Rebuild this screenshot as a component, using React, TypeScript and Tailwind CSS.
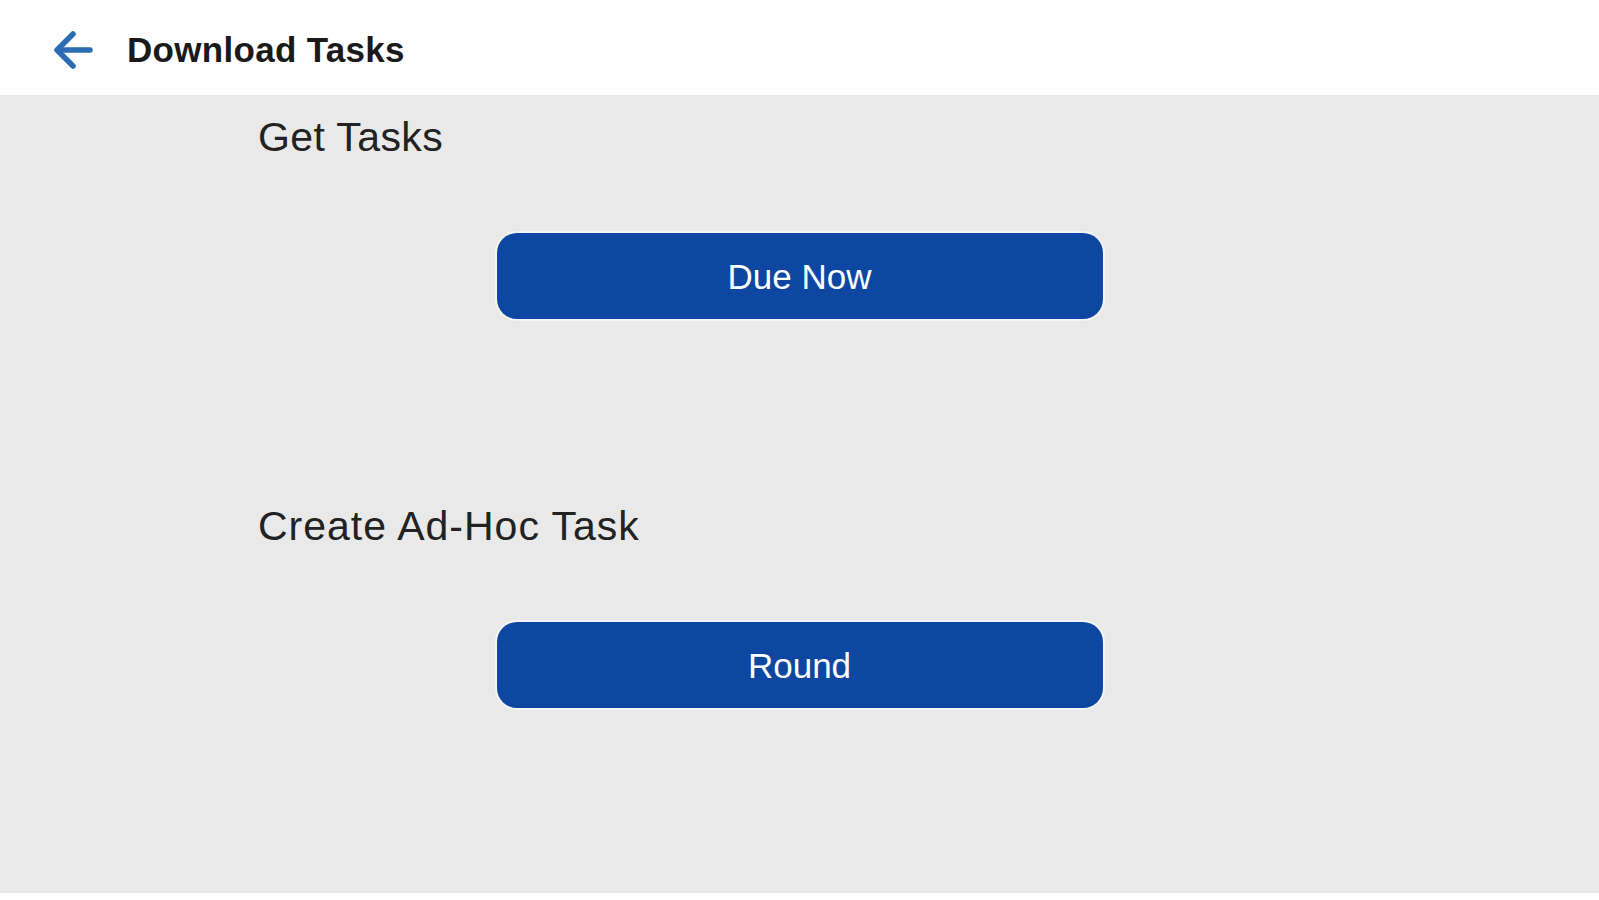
import React from 'react';

function BackArrow() {
  return (
    <svg width="42" height="38" viewBox="0 0 42 38" fill="none" className="text-[#2c6cb4]">
      <path d="M22 3 6 19l16 16" stroke="currentColor" strokeWidth="5.5" strokeLinecap="round" strokeLinejoin="round" />
      <path d="M7 19h32" stroke="currentColor" strokeWidth="5.5" strokeLinecap="round" />
    </svg>
  );
}

function TaskButton({ label }: { label: string }) {
  return (
    <div className="flex justify-center">
      <button className="w-[606px] h-[86px] rounded-[20px] bg-[#0d47a1] text-white text-[35px] leading-none shadow-[0_0_0_2px_rgba(255,255,255,0.55)]">
        {label}
      </button>
    </div>
  );
}

export default function App() {
  return (
    <div className="h-[900px] flex flex-col bg-white font-['Liberation_Sans',Arial,sans-serif]">
      {/* Header */}
      <div className="h-[95px] shrink-0 flex items-center bg-white">
        <div className="ml-[51px] mt-[4px]">
          <BackArrow />
        </div>
        <h1 className="ml-[34px] text-[35px] font-bold tracking-[0.3px] text-[#1a1a1a] leading-none mt-[3px]">Download Tasks</h1>
      </div>

      {/* Body */}
      <div className="h-[798px] bg-[#e9e9e9] pt-[22px] pl-[258px] pr-[260px]">
        <h2 className="text-[41px] leading-[41px] tracking-[0.4px] text-[#222]">Get Tasks</h2>
        <div className="mt-[75px] -ml-[258px] -mr-[260px]">
          <TaskButton label="Due Now" />
        </div>

        <h2 className="mt-[187px] text-[41px] leading-[41px] tracking-[1px] text-[#222]">Create Ad-Hoc Task</h2>
        <div className="mt-[75px] -ml-[258px] -mr-[260px]">
          <TaskButton label="Round" />
        </div>
      </div>
    </div>
  );
}
